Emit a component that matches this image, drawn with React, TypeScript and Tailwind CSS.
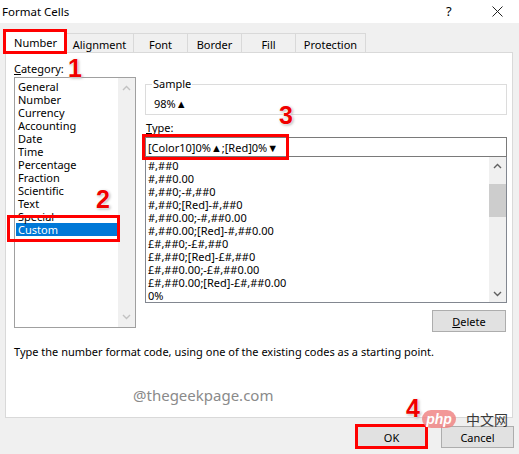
import React from 'react';

const categories = [
  'General', 'Number', 'Currency', 'Accounting', 'Date', 'Time',
  'Percentage', 'Fraction', 'Scientific', 'Text', 'Special', 'Custom',
];

const codes = [
  '#,##0',
  '#,##0.00',
  '#,##0;-#,##0',
  '#,##0;[Red]-#,##0',
  '#,##0.00;-#,##0.00',
  '#,##0.00;[Red]-#,##0.00',
  '£#,##0;-£#,##0',
  '£#,##0;[Red]-£#,##0',
  '£#,##0.00;-£#,##0.00',
  '£#,##0.00;[Red]-£#,##0.00',
  '0%',
];

const tabs = [
  { label: 'Alignment', w: 'w-[69px]' },
  { label: 'Font', w: 'w-[55px]' },
  { label: 'Border', w: 'w-[55px]' },
  { label: 'Fill', w: 'w-[55px]' },
  { label: 'Protection', w: 'w-[71px]' },
];

function Chevron({ up, color }: { up?: boolean; color: string }) {
  return (
    <svg width="9" height="6" viewBox="0 0 9 6">
      <polyline
        points={up ? '1,5 4.5,1.5 8,5' : '1,1 4.5,4.5 8,1'}
        fill="none" stroke={color} strokeWidth="1.4" />
    </svg>
  );
}

function Num({ n, className }: { n: string; className: string }) {
  return (
    <span className={`absolute z-20 font-['Liberation_Sans',sans-serif] font-bold text-[25px] leading-none text-[#f00000] [text-shadow:0_0_2px_#fff,0_0_2px_#fff,1px_1px_3px_#999] ${className}`}>
      {n}
    </span>
  );
}

export default function App() {
  return (
    <div className="relative w-[519px] h-[454px] overflow-hidden bg-[#f0f0f0] text-[11px] leading-[13px] text-black font-['Noto_Sans',sans-serif]">
      {/* title bar */}
      <div className="h-[23px] bg-white flex items-center pl-[2px] text-[11.5px]">
        <span className="flex-1">Format Cells</span>
        <span className="w-[20px] text-[13px] mr-[26px]">?</span>
        <svg width="11" height="11" viewBox="0 0 11 11" className="mr-[16px]">
          <path d="M0.5 0.5 L10.5 10.5 M10.5 0.5 L0.5 10.5" stroke="#222" strokeWidth="1" />
        </svg>
      </div>

      {/* tabs */}
      <div className="relative z-10 flex items-end h-[22px] mt-[7px] ml-[5px]">
        <div className="w-[61px] h-[23px] -mb-px bg-white border border-b-0 border-[#d9d9d9] flex items-center justify-center">
          Number
        </div>
        {tabs.map(t => (
          <div key={t.label}
            className={`${t.w} h-[19px] -ml-px border border-b-0 border-[#d9d9d9] flex items-center justify-center pt-[2px]`}>
            {t.label}
          </div>
        ))}
      </div>

      {/* panel */}
      <div className="w-[508px] h-[366px] ml-[5px] bg-white border border-[#d9d9d9] pl-[8px]">
        <div className="flex">
          {/* category */}
          <div className="w-[122px]">
            <div className="mt-[8px] h-[16px] leading-[16px]">
              <span className="underline">C</span>ategory:
            </div>
            <div className="h-[251px] border border-[#a0a0a0] flex">
              <div className="flex-1 pt-[2px] pl-[1px]">
                {categories.map(c => (
                  <div key={c}
                    className={`h-[13px] pl-[2px] ${c === 'Custom' ? 'bg-[#0078d7] text-white' : ''}`}>
                    {c}
                  </div>
                ))}
              </div>
              <div className="w-[17px] bg-[#f0f0f0] flex flex-col items-center justify-between py-[7px]">
                <Chevron up color="#c2c2c2" />
                <Chevron color="#c2c2c2" />
              </div>
            </div>
          </div>

          {/* right column */}
          <div className="w-[362px] ml-[9px] flex flex-col">
            <div className="mt-[31px] h-[31px] border border-[#dcdcdc] pl-[8px]">
              <div className="-mt-[8px] -ml-[2px] w-fit px-[1px] bg-white">Sample</div>
              <div className="mt-[7px]">98%▲</div>
            </div>
            <div className="mt-[5px] h-[16px] leading-[16px] pl-[1px]">
              <span className="underline">T</span>ype:
            </div>
            <div className="mt-[1px] h-[20px] border border-[#7a7a7a] pl-[2px] flex items-center">
              [Color10]0%▲;[Red]0%▼
            </div>
            <div className="h-[146px] border border-[#828790] border-t-0 flex">
              <div className="flex-1 pt-[2px] pl-[2px]">
                {codes.map(c => (
                  <div key={c} className="h-[13px]">{c}</div>
                ))}
              </div>
              <div className="w-[17px] bg-[#f0f0f0] flex flex-col items-center">
                <div className="h-[17px] flex items-center"><Chevron up color="#606060" /></div>
                <div className="w-[17px] h-[33px] bg-[#cdcdcd] mt-[10px]" />
                <div className="flex-1" />
                <div className="h-[17px] flex items-center"><Chevron color="#606060" /></div>
              </div>
            </div>
            <div className="self-end mt-[7px] mr-[1px] w-[74px] h-[22px] bg-[#e1e1e1] border border-[#adadad] flex items-center justify-center">
              <span className="underline">D</span>elete
            </div>
          </div>
        </div>

        <div className="mt-[13px] h-[14px] leading-[14px]">
          Type the number format code, using one of the existing codes as a starting point.
        </div>
        <div className="mt-[27px] pl-[119px] text-[15px] leading-[18px] text-[#8a8a8a]">
          @thegeekpage.com
        </div>
      </div>

      {/* buttons */}
      <div className="flex justify-end gap-[13px] mt-[8px] mr-[5px]">
        <div className="w-[73px] h-[22px] bg-[#e1e1e1] border border-[#0078d7] flex items-center justify-center">OK</div>
        <div className="w-[73px] h-[22px] bg-[#e1e1e1] border border-[#adadad] flex items-center justify-center">Cancel</div>
      </div>

      {/* annotations */}
      <div className="absolute z-20 left-[3px] top-[29px] w-[64px] h-[25px] border-[3px] border-[#ff0000]" />
      <div className="absolute z-20 left-[7px] top-[215px] w-[113px] h-[27px] border-[3px] border-[#ff0000]" />
      <div className="absolute z-20 left-[142px] top-[134px] w-[147px] h-[26px] border-[3px] border-[#ff0000]" />
      <div className="absolute z-20 left-[355px] top-[424px] w-[73px] h-[25px] border-[3px] border-[#ff0000]" />
      <Num n="1" className="left-[68px] top-[56px]" />
      <Num n="2" className="left-[96px] top-[187px]" />
      <Num n="3" className="left-[279px] top-[103px]" />
      <Num n="4" className="left-[406px] top-[396px]" />

      {/* php watermark */}
      <div className="absolute z-20 left-[422px] top-[410px] w-[34px] h-[18px] rounded-full bg-[#ef7e7e]/80 flex items-center justify-center">
        <span className="italic font-bold text-white text-[14px] leading-none font-['Liberation_Sans',sans-serif]">php</span>
      </div>
      <span className="absolute z-20 left-[466px] top-[411px] text-[14px] leading-[16px] text-[#3a3a3a] font-['Noto_Sans_CJK_SC',sans-serif]">中文网</span>
    </div>
  );
}
